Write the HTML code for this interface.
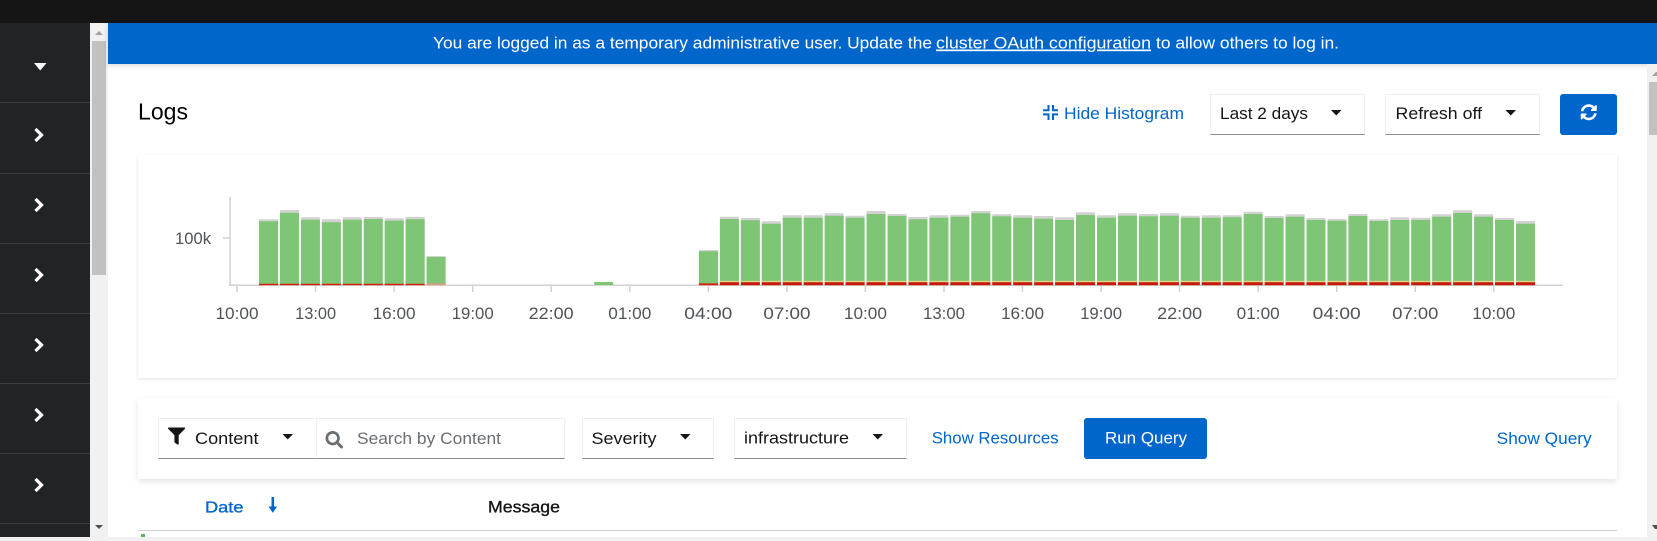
<!DOCTYPE html>
<html lang="en">
<head>
<meta charset="utf-8">
<title>Logs</title>
<style>
html,body{margin:0;padding:0;width:1657px;height:541px;overflow:hidden;background:#fff}
div{position:absolute;box-sizing:border-box}
.sel{background:#fff;border:1px solid #f0f0f0;border-bottom:1px solid #8a8d90}
svg{position:absolute;left:0;top:0}
text{font-family:"Liberation Sans",sans-serif;font-size:17px}
.axis text{font-size:17px;fill:#505356;text-anchor:middle}
</style>
</head>
<body>
<div style="left:108px;top:64px;width:1539px;height:473px;background:#fff"></div>
<div style="left:0;top:0;width:1657px;height:23px;background:#151515"></div>
<div style="left:0;top:23px;width:90px;height:514px;background:#212427"></div>
<div style="left:90px;top:23px;width:18px;height:514px;background:#f1f1f1"></div>
<div style="left:92px;top:41px;width:14px;height:234px;background:#c1c1c1"></div>
<div style="left:108px;top:23px;width:1549px;height:41px;background:#06c;box-shadow:0 2px 5px rgba(3,3,3,.14)"></div>
<div style="left:1647px;top:64px;width:10px;height:473px;background:#f1f1f1"></div>
<div style="left:1649px;top:82px;width:8px;height:53px;background:#c1c1c1"></div>
<div style="left:0;top:537px;width:1657px;height:4px;background:#f1f1f1"></div>

<div style="left:138px;top:155px;width:1479px;height:223px;background:#fff;box-shadow:0 1px 3px rgba(3,3,3,.12)"></div>
<div style="left:138px;top:398px;width:1479px;height:81px;background:#fff;box-shadow:0 3px 6px rgba(3,3,3,.10),0 0 1px rgba(3,3,3,.03)"></div>
<div style="left:138px;top:530px;width:1479px;height:1px;background:#d2d2d2"></div>
<div style="left:141px;top:534px;width:4px;height:3px;background:#5cb85c"></div>

<div class="sel" style="left:1210px;top:94px;width:155px;height:41px"></div>
<div class="sel" style="left:1385px;top:94px;width:155px;height:41px"></div>
<div style="left:1560px;top:94px;width:57px;height:41px;background:#06c;border-radius:3px"></div>
<div class="sel" style="left:158px;top:418px;width:159px;height:41px"></div>
<div class="sel" style="left:316px;top:418px;width:249px;height:41px"></div>
<div class="sel" style="left:582px;top:418px;width:132px;height:41px"></div>
<div class="sel" style="left:734px;top:418px;width:173px;height:41px"></div>
<div style="left:1084px;top:418px;width:123px;height:41px;background:#06c;border-radius:3px"></div>

<svg width="1657" height="541" viewBox="0 0 1657 541" xmlns="http://www.w3.org/2000/svg">
<!-- sidebar -->
<g stroke="#3c3f42" stroke-width="1">
<path d="M0 102.500H90M0 173.500H90M0 243.500H90M0 313.500H90M0 383.500H90M0 453.500H90M0 523.500H90"/>
</g>
<path d="M34 63h12.500l-6.250 7.500z" fill="#fff"/>
<g fill="none" stroke="#fff" stroke-width="3.200">
<path d="M35.500 129l6 6-6 6"/><path d="M35.500 199l6 6-6 6"/><path d="M35.500 269l6 6-6 6"/><path d="M35.500 339l6 6-6 6"/><path d="M35.500 409l6 6-6 6"/><path d="M35.500 479l6 6-6 6"/>
</g>
<!-- scroll arrows -->
<path d="M95 35h8l-4-4z" fill="#a3a3a3"/>
<path d="M95 525h8l-4 4z" fill="#505050"/>
<path d="M1652 76h5v-4h-1z" fill="#a3a3a3"/>
<path d="M1652 525h5v4h-2z" fill="#505050"/>

<!-- banner -->
<text x="433" y="48.500" fill="#fff" textLength="499" lengthAdjust="spacingAndGlyphs">You are logged in as a temporary administrative user. Update the</text>
<text x="936" y="48.500" fill="#fff" textLength="215" lengthAdjust="spacingAndGlyphs" text-decoration="underline">cluster OAuth configuration</text>
<text x="1156" y="48.500" fill="#fff" textLength="183" lengthAdjust="spacingAndGlyphs">to allow others to log in.</text>

<!-- header -->
<text x="138" y="119.500" fill="#000" style="font-size:23px" textLength="50" lengthAdjust="spacingAndGlyphs">Logs</text>
<path d="M1048.500 105v5.200H1043M1053 105v5.200h5M1043 114.400h5.500V120M1058 114.400h-5V120" fill="none" stroke="#06c" stroke-width="2"/>
<text x="1064" y="119" fill="#06c" textLength="120" lengthAdjust="spacingAndGlyphs">Hide Histogram</text>
<text x="1220" y="119" fill="#151515" textLength="88" lengthAdjust="spacingAndGlyphs">Last 2 days</text>
<path d="M1331 110h10.500l-5.250 5.500z" fill="#151515"/>
<text x="1395.500" y="119" fill="#151515" textLength="86.500" lengthAdjust="spacingAndGlyphs">Refresh off</text>
<path d="M1505.500 110h10.500l-5.250 5.500z" fill="#151515"/>
<g transform="translate(1580.500 104) scale(.0323)"><path fill="#fff" d="M370.72 133.28C339.458 104.008 298.888 87.962 255.848 88c-77.458.068-144.328 53.178-162.791 126.85-1.344 5.363-6.122 9.15-11.651 9.15H24.103c-7.498 0-13.194-6.807-11.807-14.176C33.933 94.924 134.813 8 256 8c66.448 0 126.791 26.136 171.315 68.685L463.03 40.97C478.149 25.851 504 36.559 504 57.941V192c0 13.255-10.745 24-24 24H345.941c-21.382 0-32.09-25.851-16.971-40.971l41.75-41.749zM32 296h134.059c21.382 0 32.09 25.851 16.971 40.971l-41.75 41.75c31.262 29.273 71.835 45.319 114.876 45.28 77.418-.07 144.315-53.144 162.787-126.849 1.344-5.363 6.122-9.15 11.651-9.15h57.304c7.498 0 13.194 6.807 11.807 14.176C478.067 417.076 377.187 504 256 504c-66.448 0-126.791-26.136-171.315-68.685L48.97 471.03C33.851 486.149 8 475.441 8 454.059V320c0-13.255 10.745-24 24-24z"/></g>

<!-- chart axes -->
<g stroke="#d2d2d2" stroke-width="1.500" fill="none">
<path d="M230 197V285.500M223 238H230M229 285.300H1562.500"/>
<path d="M237 285v7M315.600 285v7M394.100 285v7M472.700 285v7M551.200 285v7M629.800 285v7M708.300 285v7M786.900 285v7M865.400 285v7M944 285v7M1022.500 285v7M1101.100 285v7M1179.600 285v7M1258.200 285v7M1336.700 285v7M1415.300 285v7M1493.800 285v7"/>
</g>
<text x="175" y="244" fill="#505356" textLength="36" lengthAdjust="spacingAndGlyphs">100k</text>

<!-- bars: grey tops -->
<path fill="#d2d2d2" d="M259 219.300h19V285h-19zM279.950 210h19V285h-19zM300.900 217.300h19V285h-19zM321.850 219.300h19V285h-19zM342.800 217.300h19V285h-19zM363.750 217h19V285h-19zM384.700 218.300h19V285h-19zM405.650 217h19V285h-19zM426.600 256h19V285h-19zM698.950 250h19V285h-19zM719.900 216.700h19V285h-19zM740.850 218h19V285h-19zM761.800 221.300h19V285h-19zM782.750 215.300h19V285h-19zM803.700 215.300h19V285h-19zM824.650 213.300h19V285h-19zM845.600 215.700h19V285h-19zM866.550 211h19V285h-19zM887.500 214h19V285h-19zM908.450 217h19V285h-19zM929.400 215.300h19V285h-19zM950.350 214.700h19V285h-19zM971.300 211h19V285h-19zM992.250 214.300h19V285h-19zM1013.200 215.300h19V285h-19zM1034.150 216h19V285h-19zM1055.100 217.300h19V285h-19zM1076.050 212.300h19V285h-19zM1097 215.300h19V285h-19zM1117.950 213.300h19V285h-19zM1138.900 214h19V285h-19zM1159.850 213.300h19V285h-19zM1180.800 215.700h19V285h-19zM1201.750 215.300h19V285h-19zM1222.700 215.300h19V285h-19zM1243.650 211.700h19V285h-19zM1264.600 216h19V285h-19zM1285.550 214.300h19V285h-19zM1306.500 218h19V285h-19zM1327.450 219h19V285h-19zM1348.400 214h19V285h-19zM1369.350 219.300h19V285h-19zM1390.300 217.300h19V285h-19zM1411.250 217.700h19V285h-19zM1432.200 214.300h19V285h-19zM1453.150 210.300h19V285h-19zM1474.100 214.300h19V285h-19zM1495.050 218h19V285h-19zM1516 221h19V285h-19z"/>
<!-- bars: green -->
<path fill="#7ec675" d="M259 221.300h19V285h-19zM279.950 212.700h19V285h-19zM300.900 219.700h19V285h-19zM321.850 222.300h19V285h-19zM342.800 219.700h19V285h-19zM363.750 219h19V285h-19zM384.700 220.700h19V285h-19zM405.650 219.300h19V285h-19zM426.600 257h19V285h-19zM594.200 282h19V285h-19zM698.950 251.300h19V285h-19zM719.900 219h19V285h-19zM740.850 220.300h19V285h-19zM761.800 223.700h19V285h-19zM782.750 217.700h19V285h-19zM803.700 217.700h19V285h-19zM824.650 215.700h19V285h-19zM845.600 217.700h19V285h-19zM866.550 214h19V285h-19zM887.500 216h19V285h-19zM908.450 219.300h19V285h-19zM929.400 217.700h19V285h-19zM950.350 216.700h19V285h-19zM971.300 213.300h19V285h-19zM992.250 216.300h19V285h-19zM1013.200 217.700h19V285h-19zM1034.150 218.700h19V285h-19zM1055.100 220h19V285h-19zM1076.050 215h19V285h-19zM1097 217.700h19V285h-19zM1117.950 215.700h19V285h-19zM1138.900 216.300h19V285h-19zM1159.850 215.700h19V285h-19zM1180.800 217.700h19V285h-19zM1201.750 217.700h19V285h-19zM1222.700 217.300h19V285h-19zM1243.650 214h19V285h-19zM1264.600 218h19V285h-19zM1285.550 216.700h19V285h-19zM1306.500 220h19V285h-19zM1327.450 220.700h19V285h-19zM1348.400 216h19V285h-19zM1369.350 221h19V285h-19zM1390.300 220h19V285h-19zM1411.250 220h19V285h-19zM1432.200 216.700h19V285h-19zM1453.150 213h19V285h-19zM1474.100 216.700h19V285h-19zM1495.050 220h19V285h-19zM1516 223.700h19V285h-19z"/>
<!-- bars: yellow / red bottoms -->
<line x1="719.900" y1="281.600" x2="1535" y2="281.600" stroke="#e6d488" stroke-width="1.400" stroke-dasharray="19 1.950"/>
<line x1="719.900" y1="283.800" x2="1535" y2="283.800" stroke="#c9190b" stroke-width="3" stroke-dasharray="19 1.950"/>
<line x1="259" y1="284.500" x2="424.650" y2="284.500" stroke="#d8200f" stroke-width="1.600" stroke-dasharray="19 1.950"/>
<line x1="698.950" y1="284.300" x2="717.950" y2="284.300" stroke="#d8200f" stroke-width="1.800"/>
<line x1="426.600" y1="284.300" x2="445.600" y2="284.300" stroke="#e09a80" stroke-width="1.800"/>

<!-- chart labels -->
<g class="axis">
<text x="237" y="319" textLength="43" lengthAdjust="spacingAndGlyphs">10:00</text>
<text x="315.600" y="319" textLength="41" lengthAdjust="spacingAndGlyphs">13:00</text>
<text x="394.100" y="319" textLength="43" lengthAdjust="spacingAndGlyphs">16:00</text>
<text x="472.700" y="319" textLength="42" lengthAdjust="spacingAndGlyphs">19:00</text>
<text x="551.200" y="319" textLength="45" lengthAdjust="spacingAndGlyphs">22:00</text>
<text x="629.800" y="319" textLength="43" lengthAdjust="spacingAndGlyphs">01:00</text>
<text x="708.300" y="319" textLength="48" lengthAdjust="spacingAndGlyphs">04:00</text>
<text x="786.900" y="319" textLength="47" lengthAdjust="spacingAndGlyphs">07:00</text>
<text x="865.400" y="319" textLength="43" lengthAdjust="spacingAndGlyphs">10:00</text>
<text x="944" y="319" textLength="42" lengthAdjust="spacingAndGlyphs">13:00</text>
<text x="1022.500" y="319" textLength="43" lengthAdjust="spacingAndGlyphs">16:00</text>
<text x="1101.100" y="319" textLength="42" lengthAdjust="spacingAndGlyphs">19:00</text>
<text x="1179.600" y="319" textLength="45" lengthAdjust="spacingAndGlyphs">22:00</text>
<text x="1258.200" y="319" textLength="43" lengthAdjust="spacingAndGlyphs">01:00</text>
<text x="1336.700" y="319" textLength="48" lengthAdjust="spacingAndGlyphs">04:00</text>
<text x="1415.300" y="319" textLength="46" lengthAdjust="spacingAndGlyphs">07:00</text>
<text x="1493.800" y="319" textLength="43" lengthAdjust="spacingAndGlyphs">10:00</text>
</g>

<!-- filter row -->
<g transform="translate(168 427.500) scale(.0335)"><path fill="#151515" d="M487.976 0H24.028C2.71 0-8.047 25.866 7.058 40.971L192 225.941V432c0 7.831 3.821 15.17 10.237 19.662l80 55.98C298.02 518.69 320 507.493 320 487.980V225.941l184.947-184.970C520.021 25.896 509.338 0 487.976 0z"/></g>
<text x="195" y="444" fill="#151515" textLength="63.500" lengthAdjust="spacingAndGlyphs">Content</text>
<path d="M282.500 434h10.500l-5.250 5.500z" fill="#151515"/>
<g transform="translate(325.500 431) scale(.0345)"><path fill="#6a6e73" d="M505 442.700L405.300 343c-4.500-4.500-10.600-7-17-7H372c27.600-35.300 44-79.700 44-128C416 93.100 322.900 0 208 0S0 93.100 0 208s93.100 208 208 208c48.300 0 92.700-16.400 128-44v16.300c0 6.400 2.500 12.500 7 17l99.700 99.700c9.400 9.400 24.600 9.400 33.900 0l28.300-28.300c9.400-9.400 9.400-24.600.1-34zM208 336c-70.700 0-128-57.200-128-128 0-70.700 57.200-128 128-128 70.700 0 128 57.200 128 128 0 70.700-57.200 128-128 128z"/></g>
<text x="357" y="444" fill="#6a6e73" textLength="144" lengthAdjust="spacingAndGlyphs">Search by Content</text>
<text x="591.500" y="444" fill="#151515" textLength="65" lengthAdjust="spacingAndGlyphs">Severity</text>
<path d="M680 434h10.500l-5.250 5.500z" fill="#151515"/>
<text x="744" y="443.500" fill="#151515" textLength="105" lengthAdjust="spacingAndGlyphs">infrastructure</text>
<path d="M872.500 434h10.500l-5.250 5.500z" fill="#151515"/>
<text x="931.700" y="443.500" fill="#06c" textLength="127" lengthAdjust="spacingAndGlyphs">Show Resources</text>
<text x="1105" y="443.500" fill="#fff" textLength="82" lengthAdjust="spacingAndGlyphs">Run Query</text>
<text x="1496.700" y="444" fill="#06c" textLength="95" lengthAdjust="spacingAndGlyphs">Show Query</text>

<!-- table header -->
<text x="205" y="512.500" fill="#06c" stroke="#06c" stroke-width=".35" style="font-size:16px" textLength="38.500" lengthAdjust="spacingAndGlyphs">Date</text>
<path d="M272.800 497v10" stroke="#06c" stroke-width="2.600" fill="none"/>
<path d="M268.500 506.500h8.600l-4.300 6.300z" fill="#06c"/>
<text x="488" y="512.500" fill="#151515" stroke="#151515" stroke-width=".35" style="font-size:16.500px" textLength="72" lengthAdjust="spacingAndGlyphs">Message</text>
</svg>
</body>
</html>
